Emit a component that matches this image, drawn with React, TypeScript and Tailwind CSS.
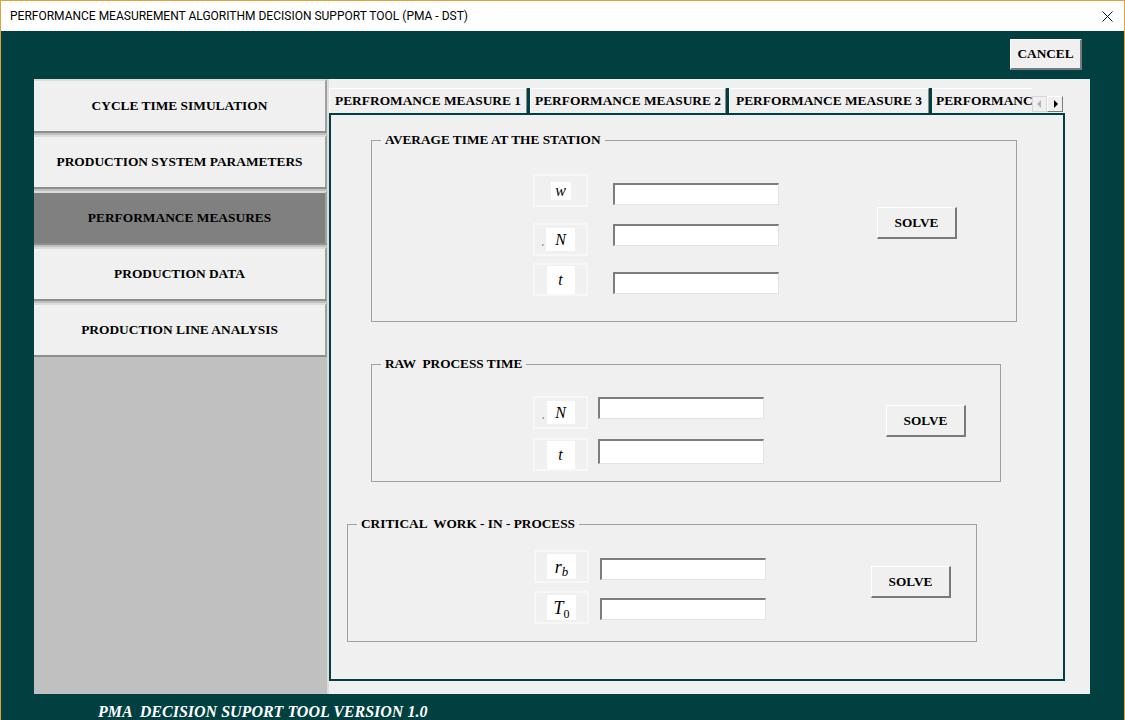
import React from 'react'

const serif = "font-['Liberation_Serif','Times_New_Roman',serif]"

const navItems = [
  'CYCLE TIME SIMULATION',
  'PRODUCTION SYSTEM PARAMETERS',
  'PERFORMANCE MEASURES',
  'PRODUCTION DATA',
  'PRODUCTION LINE ANALYSIS',
]

function RaisedButton({ label, className }: { label: string; className: string }) {
  return (
    <button
      className={`${className} ${serif} flex items-center justify-center bg-[#f0f0f0] border-t border-l border-t-white border-l-white border-r-2 border-b-2 border-r-[#7a7a7a] border-b-[#7a7a7a] text-[13.3px] font-bold text-black`}
    >
      {label}
    </button>
  )
}

function Field({ className }: { className: string }) {
  return (
    <div
      className={`${className} w-[166px] h-[22px] bg-white border-t-2 border-l-2 border-r border-b border-t-[#7d7d7d] border-l-[#7d7d7d] border-r-[#e3e3e3] border-b-[#e3e3e3]`}
    />
  )
}

function VarBox({ children, comma, inner }: { children: React.ReactNode; comma?: boolean; inner: string }) {
  return (
    <div className="w-[55px] h-[33px] flex items-center justify-center border-2 border-[#f7f7f7]">
      <div className={`${inner} relative bg-white flex items-center justify-center`}>
        {comma && <span className="absolute -left-[4px] bottom-[5px] text-[7px] leading-none text-black">,</span>}
        <span className={`${serif} italic text-[16px] leading-none text-black`}>{children}</span>
      </div>
    </div>
  )
}

function Group({ title, className, children }: { title: string; className: string; children: React.ReactNode }) {
  return (
    <div className={`${className} relative border border-[#a0a0a0] shrink-0`}>
      <span
        className={`absolute -top-[9px] left-[9px] px-[4px] bg-[#f0f0f0] ${serif} text-[13.3px] font-bold leading-[16px] whitespace-pre text-black`}
      >
        {title}
      </span>
      {children}
    </div>
  )
}

export default function App() {
  return (
    <div className="w-[1125px] h-[720px] flex flex-col overflow-hidden border-l border-r border-t border-[#e3a23b] bg-[#004040]">
      {/* title bar */}
      <div className="h-[30px] shrink-0 bg-white flex items-center justify-between pl-[9px] pr-[11px]">
        <span className="font-['Roboto',sans-serif] text-[12px] text-black">
          PERFORMANCE MEASUREMENT ALGORITHM DECISION SUPPORT TOOL (PMA - DST)
        </span>
        <svg width="11" height="11" viewBox="0 0 11 11">
          <path d="M0.5 0.5 L10.5 10.5 M10.5 0.5 L0.5 10.5" stroke="#111" strokeWidth="1" />
        </svg>
      </div>

      {/* body */}
      <div className="flex-1 flex flex-col pt-[8px]">
        <div className="flex justify-end pr-[42px]">
          <RaisedButton label="CANCEL" className="w-[72px] h-[31px]" />
        </div>

        <div className="mt-[9px] ml-[33px] w-[1056px] h-[615px] flex">
          {/* left nav */}
          <div className="w-[293px] bg-[#c0c0c0] flex flex-col gap-[2px]">
            {navItems.map((item, i) => (
              <div
                key={item}
                className={`h-[54px] flex items-center justify-center border-t-2 border-b-2 border-r-2 border-t-[#dcdcdc] border-b-[#8e8e8e] border-r-[#a0a0a0] ${serif} text-[13.4px] font-bold text-black ${
                  i === 2 ? 'bg-[#808080]' : 'bg-[#f0f0f0]'
                }`}
              >
                {item}
              </div>
            ))}
          </div>

          {/* right area */}
          <div className="flex-1 bg-[#f0f0f0] border-l-2 border-[#dcdcdc] pt-[9px]">
            <div className="h-[25px] flex">
              {['PERFROMANCE MEASURE 1', 'PERFORMANCE MEASURE 2', 'PERFORMANCE MEASURE 3'].map((t, i) => (
                <React.Fragment key={t}>
                  <div
                    className={`${i === 0 ? 'w-[198px]' : i === 1 ? 'w-[196px]' : 'w-[200px]'} h-[25px] flex items-center justify-center bg-[#f0f0f0] border-t border-l border-t-white border-l-white border-r border-r-[#8a8a8a] ${serif} text-[13.4px] font-bold whitespace-nowrap text-black`}
                  >
                    {t}
                  </div>
                  <div className="w-[3px] h-[25px] bg-[#004040]" />
                </React.Fragment>
              ))}
              <div className="relative w-[100px] h-[25px] overflow-hidden bg-[#f0f0f0] border-t border-t-white pl-[4px] flex items-center">
                <span className={`${serif} text-[13.4px] font-bold whitespace-nowrap text-black`}>PERFORMANCE MEASURE 4</span>
              </div>
              <div className="flex items-end pb-[1px]">
                <div className="w-[15px] h-[16px] bg-[#f0f0f0] border border-[#d6d6d6] flex items-center justify-center">
                  <svg width="5" height="8" viewBox="0 0 5 8">
                    <path d="M4 0 L0 4 L4 8 Z" fill="#b4b4b4" />
                  </svg>
                </div>
                <div className="w-[16px] h-[16px] bg-[#f0f0f0] border-t border-l border-t-white border-l-white border-r border-b border-r-[#7a7a7a] border-b-[#7a7a7a] flex items-center justify-center">
                  <svg width="5" height="8" viewBox="0 0 5 8">
                    <path d="M1 0 L5 4 L1 8 Z" fill="#000" />
                  </svg>
                </div>
              </div>
            </div>

            {/* tab page */}
            <div className="w-[736px] h-[568px] border-2 border-[#004040] flex flex-col pt-[25px]">
              <Group title="AVERAGE TIME AT THE STATION" className="ml-[40px] w-[646px] h-[182px]">
                <div className="flex pt-[33px] pl-[161px]">
                  <div className="flex flex-col">
                    <div className="flex items-start">
                      <VarBox inner="w-[20px] h-[18px]">w</VarBox>
                      <Field className="ml-[25px] mt-[9px]" />
                    </div>
                    <div className="flex items-start mt-[16px]">
                      <VarBox comma inner="w-[29px] h-[23px]">N</VarBox>
                      <Field className="ml-[25px] mt-[1px]" />
                    </div>
                    <div className="flex items-start mt-[7px]">
                      <VarBox inner="w-[28px] h-[28px]">t</VarBox>
                      <Field className="ml-[25px] mt-[9px]" />
                    </div>
                  </div>
                  <RaisedButton label="SOLVE" className="ml-[98px] mt-[33px] w-[80px] h-[32px]" />
                </div>
              </Group>

              <Group title="RAW  PROCESS TIME" className="ml-[40px] mt-[42px] w-[630px] h-[118px]">
                <div className="flex pt-[31px] pl-[161px]">
                  <div className="flex flex-col">
                    <div className="flex items-start">
                      <VarBox comma inner="w-[28px] h-[23px]">N</VarBox>
                      <Field className="ml-[10px] mt-[1px]" />
                    </div>
                    <div className="flex items-start mt-[9px]">
                      <VarBox inner="w-[28px] h-[28px]">t</VarBox>
                      <Field className="ml-[10px] mt-[1px] h-[25px]" />
                    </div>
                  </div>
                  <RaisedButton label="SOLVE" className="ml-[122px] mt-[9px] w-[80px] h-[32px]" />
                </div>
              </Group>

              <Group title="CRITICAL  WORK - IN - PROCESS" className="ml-[16px] mt-[42px] w-[630px] h-[118px]">
                <div className="flex pt-[25px] pl-[186px]">
                  <div className="flex flex-col">
                    <div className="flex items-start">
                      <VarBox inner="w-[29px] h-[25px]">
                        <span className="text-[18px] leading-none">r</span>
                        <span className="text-[13px] leading-none relative top-[3px]">b</span>
                      </VarBox>
                      <Field className="ml-[11px] mt-[8px]" />
                    </div>
                    <div className="flex items-start mt-[8px]">
                      <VarBox inner="w-[29px] h-[25px]">
                        <span className="text-[18px] leading-none">T</span>
                        <span className="not-italic text-[12px] leading-none relative top-[4px]">0</span>
                      </VarBox>
                      <Field className="ml-[11px] mt-[7px]" />
                    </div>
                  </div>
                  <RaisedButton label="SOLVE" className="ml-[105px] mt-[16px] w-[80px] h-[32px]" />
                </div>
              </Group>
            </div>
          </div>
        </div>

        {/* footer */}
        <div className="pl-[97px] pt-[5px]">
          <span className={`${serif} italic font-bold text-[16px] leading-[16px] text-white whitespace-pre`}>
            PMA  DECISION SUPORT TOOL VERSION 1.0
          </span>
        </div>
      </div>
    </div>
  )
}
